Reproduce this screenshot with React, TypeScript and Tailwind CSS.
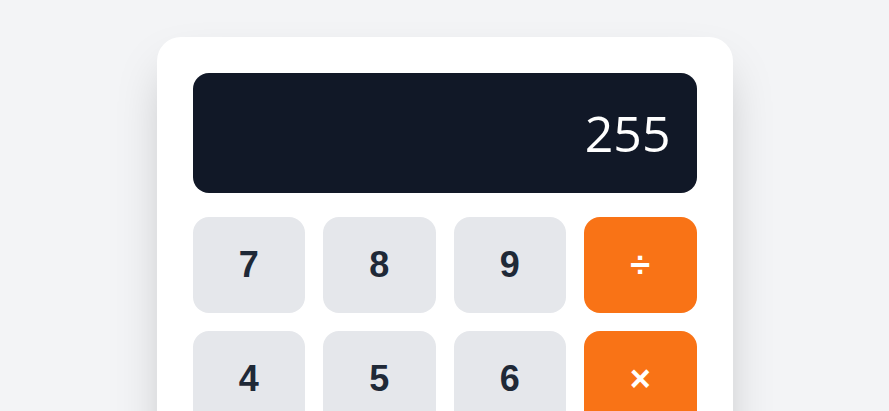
import React from 'react';

const keys = [
  { label: '7', op: false },
  { label: '8', op: false },
  { label: '9', op: false },
  { label: '÷', op: true },
  { label: '4', op: false },
  { label: '5', op: false },
  { label: '6', op: false },
  { label: '×', op: true },
  { label: '1', op: false },
  { label: '2', op: false },
  { label: '3', op: false },
  { label: '−', op: true },
];

const App = () => {
  return (
    <div className="min-h-screen bg-gray-100 pt-[37px] pb-10 font-['Liberation_Sans',Arial,sans-serif]">
      <div className="mx-auto w-full max-w-xl rounded-3xl bg-white p-9 shadow-2xl">
        <div className="mb-6 flex h-[120px] items-center justify-end rounded-2xl bg-[#111827] pr-[26px] pl-6">
          <span className="font-['Open_Sans','Noto_Sans',sans-serif] text-[50px] text-white">255</span>
        </div>

        <div className="grid grid-cols-4 gap-[18px]">
          {keys.map((key) => (
            <button
              key={key.label}
              className={
                key.op
                  ? 'flex h-24 items-center justify-center rounded-2xl bg-[#f97316] text-4xl font-bold text-white'
                  : 'flex h-24 items-center justify-center rounded-2xl bg-[#e5e7eb] text-4xl font-bold text-[#1f2937]'
              }
            >
              {key.label}
            </button>
          ))}
        </div>
      </div>
    </div>
  );
};

export default App;
